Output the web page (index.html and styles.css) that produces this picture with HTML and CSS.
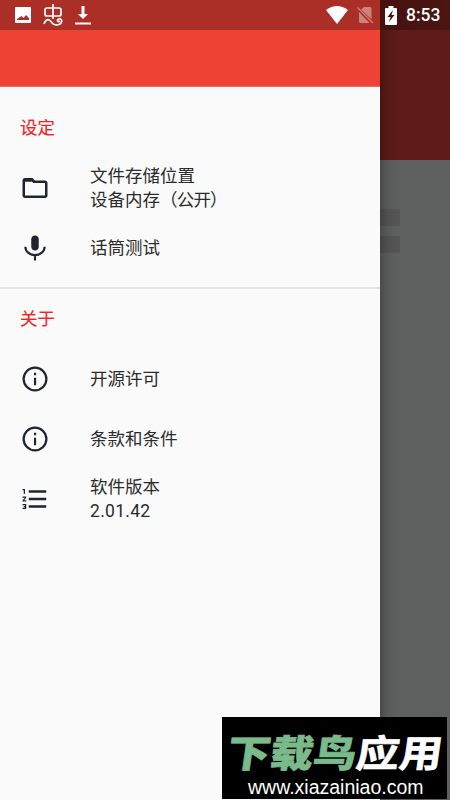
FILE: index.html
```html
<!DOCTYPE html>
<html lang="zh-CN">
<head>
<meta charset="utf-8">
<title>设定</title>
<link rel="stylesheet" href="styles.css">
</head>
<body>
<div class="screen">
  <div class="page">
    <div class="page-bar"></div>
    <div class="page-lines"><span></span><span></span></div>
  </div>
  <aside class="drawer">
    <div class="drawer-head"></div>
    <section>
      <h2>设定</h2>
      <div class="item"><svg class="icon" viewBox="0 0 24 24"><path d="M9.170 6.500l1.500 1.500H20v10H4V7h5.170M10 4H4c-1.100 0-1.990.9-1.990 2L2 18c0 1.100.9 2 2 2h16c1.100 0 2-.9 2-2V8c0-1.100-.9-2-2-2h-8l-2-2z"/></svg><p>文件存储位置<br>设备内存<span class="paren">（公开）</span></p></div>
      <div class="item"><svg class="icon" viewBox="0 0 24 24"><path d="M12 14c1.660 0 3-1.340 3-3V5c0-1.660-1.340-3-3-3S9 3.340 9 5v6c0 1.660 1.340 3 3 3z"/><path d="M4.300 11a7.700 6.700 0 0 0 15.400 0M12 17v5" fill="none" stroke="currentColor" stroke-width="1.700"/></svg><p>话筒测试</p></div>
    </section>
    <section class="about">
      <h2>关于</h2>
      <div class="item"><svg class="icon" viewBox="0 0 24 24"><circle cx="12" cy="12" r="9.100" fill="none" stroke="currentColor" stroke-width="1.800"/><path d="M11.200 7h1.700v2h-1.700zM11.200 11h1.700v6h-1.700z"/></svg><p>开源许可</p></div>
      <div class="item"><svg class="icon" viewBox="0 0 24 24"><circle cx="12" cy="12" r="9.100" fill="none" stroke="currentColor" stroke-width="1.800"/><path d="M11.200 7h1.700v2h-1.700zM11.200 11h1.700v6h-1.700z"/></svg><p>条款和条件</p></div>
      <div class="item"><svg class="icon" viewBox="0 0 24 24"><path d="M2 17h2v.5H3v1h1v.5H2v1h3v-4H2v1zm1-9h1V4H2v1h1v3zm-1 3h1.800L2 13.100v.9h3v-1H3.200L5 10.900V10H2v1zm5-6v2h14V5H7zm0 14h14v-2H7v2zm0-6h14v-2H7v2z"/></svg><p>软件版本<br><span class="version">2.01.42</span></p></div>
    </section>
  </aside>
  <header class="status">
    <div class="group">
      <svg width="16" height="16" viewBox="0 0 16 16"><path fill-rule="evenodd" d="M1 0h14q1 0 1 1v14q0 1-1 1H1q-1 0-1-1V1q0-1 1-1zM2 13h12v-2l-3-3-2.500 3-2-2L2 12z"/></svg>
      <svg class="bug" width="20" height="22" viewBox="0 0 20 22"><path d="M10 0v15M4 4h12q2 0 2 2v4q0 2-2 2H4q-2 0-2-2V6q0-2 2-2zM1 20c1-3 3-5 5-4 3 1 3 5 7 5 7 0 7-7 3-6-3 1-1 4 1 2"/></svg>
      <svg class="download" width="16" height="20" viewBox="0 0 16 20"><path d="M6.500 1h3v8H13l-5 5-5-5h3.500zM0 17.500h16v2H0z"/></svg>
    </div>
    <div class="group right">
      <svg width="22" height="18" viewBox="0 0 22 18"><path d="M0 4Q11-4 22 4L11 18z"/></svg>
      <svg class="sim" width="17" height="18" viewBox="0 0 17 18"><path d="M7 1h6q1.500 0 1.500 1.500v10.700L4 3.500zM2 6l10.500 11H3.500Q2 17 2 15.500z"/><path d="M.5 1.500L16 17" fill="none" stroke="#fff" stroke-width="1.300"/></svg>
      <svg width="12" height="19" viewBox="0 0 12 19"><path fill-rule="evenodd" d="M3.500 0h5v2H11q1 0 1 1v15q0 1-1 1H1q-1 0-1-1V3q0-1 1-1h2.500zM8 4L2.500 11h3L4 16l5.500-7h-3z"/></svg>
      <span class="clock">8:53</span>
    </div>
  </header>
  <div class="watermark">
    <div class="brand"><b>下载鸟</b><span>应用</span></div>
    <div class="site">www.xiazainiao.com</div>
  </div>
</div>
</body>
</html>
```

FILE: styles.css
```css
* { box-sizing: border-box; }
body { margin: 0; font-family: Roboto, "Noto Sans CJK SC", sans-serif; }
.screen { position: relative; width: 450px; height: 800px; overflow: hidden; background: #5e615f; }
.page-bar { height: 160px; background: #5e1b17; }
.page-lines { display: grid; gap: 10px; padding-top: 49px; }
.page-lines span { width: 400px; height: 17px; background: #575656; }
.drawer { position: absolute; inset: 0 auto 0 0; width: 380px; background: #fafafa; box-shadow: 0 0 16px rgba(0, 0, 0, .45); }
.drawer-head { height: 87px; background: #ee4235; border-bottom: 1px solid #e96b60; }
section { padding-top: 21px; }
section h2 { margin: 0 0 9px; padding-left: 20px; height: 41px; font-size: 17.400px; line-height: 41px; font-weight: 400; color: #ee2525; -webkit-text-stroke: .2px; }
.item { display: flex; align-items: center; gap: 40px; height: 60px; padding-left: 20px; color: #202431; }
.icon { width: 30px; height: 30px; fill: currentColor; }
.item p { margin: 0; font-size: 17.500px; line-height: 24px; color: #2b2b2b; }
.paren { letter-spacing: -.8px; }
.version { letter-spacing: .3px; }
.about { margin-top: 9px; padding-top: 10px; border-top: 2px solid #e3e3e3; }
.about h2 { margin-bottom: 9px; }
.status { position: absolute; inset: 0 0 auto 0; height: 30px; display: flex; justify-content: space-between; padding: 0 9px 0 15px; background: linear-gradient(90deg, #ab2f27 380px, #44120f 380px, #4b1511 100%); color: #fff; }
.group { display: flex; align-items: center; fill: #fff; }
.bug { margin-left: 12px; fill: none; stroke: #fff; stroke-width: 1.700; }
.download { margin-left: 12px; }
.sim { margin: 0 11px 0 9px; opacity: .4; }
.clock { margin-left: 9px; width: 35px; font-size: 17.500px; line-height: 30px; font-weight: 500; }
.watermark { position: absolute; left: 222px; top: 717px; width: 225px; height: 82px; padding-top: 10px; background: #000; color: #fff; }
.brand { display: flex; margin-left: 6px; font: 700 43px/46px "Noto Sans CJK SC", sans-serif; transform: skewX(-8deg) scaleY(.87); -webkit-text-stroke: .8px; }
.brand b { color: #7aba8b; }
.brand span { white-space: nowrap; }
.site { margin: 2px 0 0 26px; font: 19.500px/24px "Liberation Sans", sans-serif; }
```
